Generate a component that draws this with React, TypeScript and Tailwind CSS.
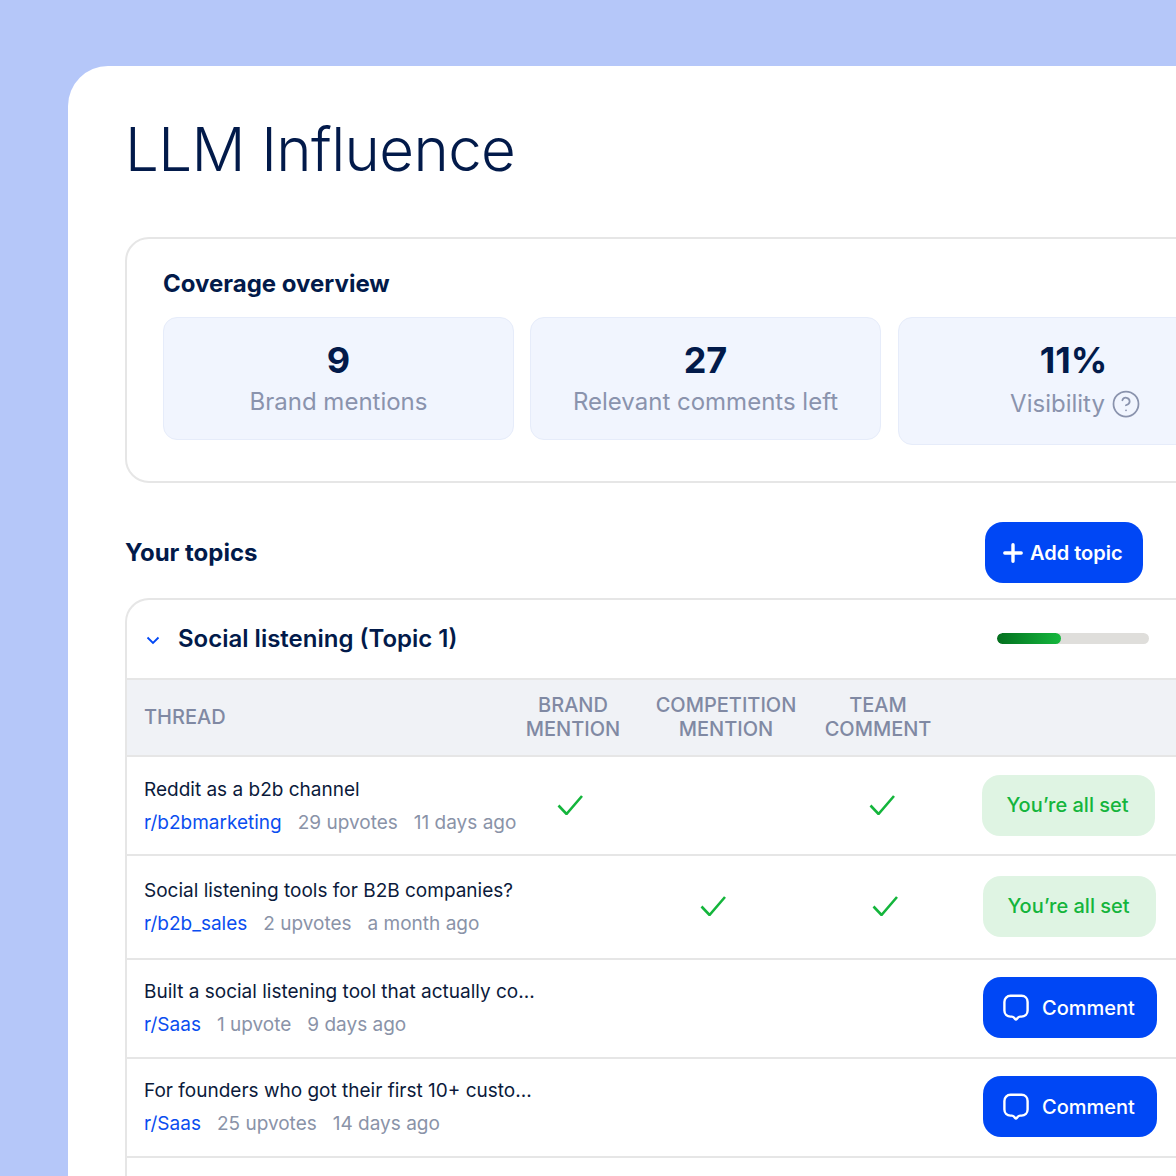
import { CircleHelp } from 'lucide-react';

const Check = ({ className }: { className: string }) => (
  <svg width="26" height="20" viewBox="0 0 26 20" fill="none" className={`shrink-0 ${className}`}>
    <path d="M1.5 10.5L9.5 19L25 1" stroke="#14B53C" strokeWidth="2.6" />
  </svg>
);

const CommentIcon = () => (
  <svg width="28" height="28" viewBox="0 0 28 28" fill="none" className="shrink-0">
    <path
      d="M8.5 1.8H19.5C23 1.8 25.6 4.4 25.6 7.9V16.6C25.6 20 23 22.6 19.5 22.6H18C17 22.6 16.4 23 15.8 23.7L14.8 25C14.3 25.6 13.6 25.6 13.1 25L12.1 23.7C11.5 23 10.9 22.6 9.9 22.6H8.5C5 22.6 2.4 20 2.4 16.6V7.9C2.4 4.4 5 1.8 8.5 1.8Z"
      stroke="white"
      strokeWidth="2.4"
    />
  </svg>
);

const AllSet = () => (
  <button className="ml-auto flex h-[61px] w-[173px] items-center justify-center rounded-[18px] bg-[#dff4e3] pr-[2px] text-[20px] font-medium text-[#14b53c]">
    You’re all set
  </button>
);

const CommentButton = () => (
  <button className="ml-auto flex h-[61px] w-[174px] items-center gap-[12px] rounded-[18px] bg-[#0047f5] pl-[19px] text-[20px] font-medium text-white">
    <CommentIcon />
    Comment
  </button>
);

const Thread = ({ title, sub, votes, age }: { title: string; sub: string; votes: string; age: string }) => (
  <div className="mt-[2px] flex flex-col gap-[9px] whitespace-nowrap">
    <div className="text-[19px] leading-[24px] text-[#0b1a3b]">{title}</div>
    <div className="flex gap-[16px] text-[19px] leading-[24px] text-[#8a93a8]">
      <span className="text-[#0a4df0]">{sub}</span>
      <span>{votes}</span>
      <span>{age}</span>
    </div>
  </div>
);

const Stat = ({ value, label, help }: { value: string; label: string; help?: boolean }) => (
  <div className={`flex w-[351px] shrink-0 flex-col items-center rounded-[14px] border border-[#e6ecfa] bg-[#f1f5fe] pt-[19px] ${help ? 'ml-[1px] h-[128px]' : 'h-[123px]'}`}>
    <div className="text-[36px] leading-[46px] font-bold text-[#021a4a]">{value}</div>
    <div className={`flex items-center gap-[6px] text-[24px] leading-[32px] text-[#8a93ad] ${help ? 'mt-[5px] ml-[4px]' : 'mt-[3px]'}`}>
      {label}
      {help && <CircleHelp size={30} strokeWidth={1.4} />}
    </div>
  </div>
);

export default function App() {
  return (
    <div className="flex h-[1176px] w-[1176px] overflow-hidden bg-[#b5c7f9] pt-[66px] pl-[68px] font-['Inter',sans-serif]">
      <div className="h-[1200px] w-[1200px] shrink-0 rounded-tl-[40px] bg-white pt-[44px] pl-[57px]">
        <h1 className="text-[60px] leading-[78px] font-light tracking-[-0.6px] text-[#021a4a]">LLM Influence</h1>

        <div className="mt-[49px] h-[246px] w-[1100px] rounded-[24px] border-2 border-[#e6e6e6] pt-[27px] pl-[36px]">
          <h2 className="text-[24px] leading-[36px] font-bold text-[#021a4a]">Coverage overview</h2>
          <div className="mt-[15px] flex gap-[16px]">
            <Stat value="9" label="Brand mentions" />
            <Stat value="27" label="Relevant comments left" />
            <Stat value="11%" label="Visibility" help />
          </div>
        </div>

        <div className="mt-[39px] flex h-[61px] w-[1018px] items-center justify-between">
          <h2 className="mt-[1px] text-[24px] font-bold text-[#021a4a]">Your topics</h2>
          <button className="flex h-[61px] w-[158px] items-center gap-[7px] rounded-[18px] bg-[#0047f5] pl-[17px] text-[20px] font-semibold text-white">
            <svg width="20" height="20" viewBox="0 0 20 20" fill="none" className="ml-[1px]">
              <path d="M10 1.8V18.2M1.8 10H18.2" stroke="white" strokeWidth="3.4" strokeLinecap="round" />
            </svg>
            Add topic
          </button>
        </div>

        <div className="mt-[15px] w-[1100px] rounded-tl-[24px] border-t-2 border-l-2 border-[#e6e6e6]">
          <div className="flex h-[78px] w-[1049px] items-center pr-[27px] pl-[19px]">
            <svg width="14" height="9" viewBox="0 0 14 9" fill="none" className="mt-[2px]">
              <path d="M1.5 1.5L7 7L12.5 1.5" stroke="#0047F5" strokeWidth="1.8" />
            </svg>
            <h3 className="ml-[18px] text-[24px] font-semibold text-[#021a4a]">Social listening (Topic 1)</h3>
            <div className="mb-[2px] ml-auto h-[11px] w-[152px] overflow-hidden rounded-full bg-[#dfdedb]">
              <div className="h-full w-[64px] rounded-full bg-gradient-to-r from-[#04701f] to-[#15b83e]" />
            </div>
          </div>

          <div className="flex h-[79px] w-[1049px] items-center border-y-2 border-[#e6e6e6] bg-[#f0f2f6] pb-[2px] pl-[17px] text-[20px] leading-[24px] font-medium text-[#8089a3]">
            <div className="w-[362px]">THREAD</div>
            <div className="w-[134px] text-center">BRAND<br />MENTION</div>
            <div className="ml-[1px] w-[170px] text-center">COMPETITION<br />MENTION</div>
            <div className="ml-[-8px] w-[150px] text-center">TEAM<br />COMMENT</div>
          </div>

          <div className="flex h-[99px] w-[1049px] items-center border-b-2 border-[#e6e6e6] pr-[21px] pb-[1px] pl-[17px]">
            <div className="w-[413px] shrink-0">
              <Thread title="Reddit as a b2b channel" sub="r/b2bmarketing" votes="29 upvotes" age="11 days ago" />
            </div>
            <Check className="" />
            <Check className="ml-[286px]" />
            <AllSet />
          </div>

          <div className="flex h-[104px] w-[1049px] items-center border-b-2 border-[#e6e6e6] pr-[20px] pb-[2px] pl-[17px]">
            <div className="w-[556px] shrink-0">
              <Thread title="Social listening tools for B2B companies?" sub="r/b2b_sales" votes="2 upvotes" age="a month ago" />
            </div>
            <Check className="" />
            <Check className="ml-[146px]" />
            <AllSet />
          </div>

          <div className="flex h-[99px] w-[1049px] items-center border-b-2 border-[#e6e6e6] pr-[19px] pb-[2px] pl-[17px]">
            <Thread title="Built a social listening tool that actually co..." sub="r/Saas" votes="1 upvote" age="9 days ago" />
            <CommentButton />
          </div>

          <div className="flex h-[99px] w-[1049px] items-center border-b-2 border-[#e6e6e6] pr-[19px] pb-[2px] pl-[17px]">
            <Thread title="For founders who got their first 10+ custo..." sub="r/Saas" votes="25 upvotes" age="14 days ago" />
            <CommentButton />
          </div>

          <div className="flex w-[1049px] justify-end pt-[18px] pr-[19px]">
            <div className="h-[61px] w-[173px] rounded-[18px] bg-[#dff4e3]" />
          </div>
        </div>
      </div>
    </div>
  );
}
